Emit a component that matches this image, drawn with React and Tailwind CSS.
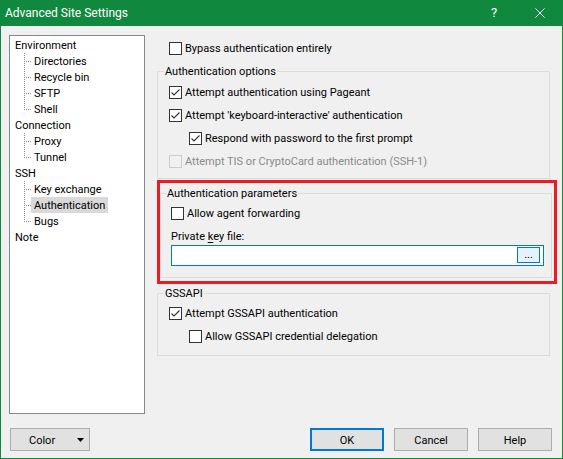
import React from "react";

const FONT = "font-['Roboto','Liberation_Sans',sans-serif]";

function Check({ checked = false, disabled = false }) {
  return (
    <span
      className={`flex h-[13px] w-[13px] shrink-0 items-center justify-center border ${
        disabled ? "border-[#cccccc] bg-[#f0f0f0]" : "border-[#333333] bg-white"
      }`}
    >
      {checked && (
        <svg width="11" height="11" viewBox="0 0 11 11">
          <polyline points="1.5,5.5 4,8 9.5,2.5" fill="none" stroke="#333333" strokeWidth="1.1" />
        </svg>
      )}
    </span>
  );
}

function CheckRow({ label, checked, disabled, indent = false, className = "" }) {
  return (
    <div className={`flex h-[16px] items-center gap-[3px] ${indent ? "pl-[20px]" : ""} ${className}`}>
      <Check checked={checked} disabled={disabled} />
      <span className={`mt-[2px] ${disabled ? "text-[#8a8a8a]" : "text-black"}`}>{label}</span>
    </div>
  );
}

function Legend({ children, className = "" }) {
  return (
    <legend className={`px-px ${className}`}>
      <span className="flex h-[16px] items-center">
        <span className="mt-[2px]">{children}</span>
      </span>
    </legend>
  );
}

const TREE = [
  { label: "Environment", children: ["Directories", "Recycle bin", "SFTP", "Shell"] },
  { label: "Connection", children: ["Proxy", "Tunnel"] },
  { label: "SSH", children: ["Key exchange", "Authentication", "Bugs"] },
  { label: "Note", children: [] },
];

function Connector({ last }) {
  return (
    <svg width="21" height="16" viewBox="0 0 21 16" className="shrink-0" shapeRendering="crispEdges">
      <line x1="14.5" y1="0" x2="14.5" y2={last ? 9 : 16} stroke="#8c8c8c" strokeDasharray="1 1" />
      <line x1="16" y1="8.5" x2="21" y2="8.5" stroke="#8c8c8c" strokeDasharray="1 1" />
    </svg>
  );
}

function Tree() {
  return (
    <div className="ml-[8px] h-[379px] w-[136px] shrink-0 border border-[#828790] bg-white pt-px">
      {TREE.map((node) => (
        <div key={node.label}>
          <div className="flex h-[16px] items-center pl-[5px]">
            <span className="mt-[2px]">{node.label}</span>
          </div>
          {node.children.map((c, i) => (
            <div key={c} className="flex h-[16px] items-center">
              <Connector last={i === node.children.length - 1} />
              <span
                className={`flex h-[16px] items-center px-[3px] ${
                  c === "Authentication" ? "bg-[#d9d9d9]" : ""
                }`}
              >
                <span className="mt-[2px]">{c}</span>
              </span>
            </div>
          ))}
        </div>
      ))}
    </div>
  );
}

function Button({ children, primary = false }) {
  return (
    <div
      className={`flex h-[23px] w-[74px] items-center justify-center bg-[#e1e1e1] ${
        primary ? "border-2 border-[#0078d7]" : "border border-[#adadad]"
      }`}
    >
      <span className="mt-[2px]">{children}</span>
    </div>
  );
}

export default function App() {
  return (
    <div className={`flex h-[459px] w-[563px] flex-col bg-[#10893e] text-[11px] leading-[16px] text-black ${FONT}`}>
      {/* Title bar */}
      <div className="flex h-[26px] shrink-0 items-center text-white">
        <span className="ml-[5px] text-[12px]">Advanced Site Settings</span>
        <div className="ml-auto flex h-[26px] w-[46px] items-center justify-center text-[13px]">?</div>
        <div className="flex h-[26px] w-[46px] items-center justify-center">
          <svg width="10" height="10" viewBox="0 0 10 10">
            <path d="M0.5 0.5 L9.5 9.5 M9.5 0.5 L0.5 9.5" stroke="#ffffff" strokeWidth="1" />
          </svg>
        </div>
      </div>

      {/* Body */}
      <div className="mx-px mb-px flex h-[432px] flex-col bg-[#f0f0f0]">
        <div className="mt-[9px] flex items-start">
          <Tree />

          <div className="ml-[12px] w-[400px]">
            <CheckRow className="ml-[12px] mt-[5px]" label="Bypass authentication entirely" />

            <fieldset className="mt-[7px] w-[393px] border border-[#dcdcdc] pb-[9px] pt-[5px]">
              <Legend className="ml-[6px]">Authentication options</Legend>
              <div className="flex flex-col gap-[7px] pl-[11px]">
                <CheckRow checked label="Attempt authentication using Pageant" />
                <CheckRow checked label="Attempt 'keyboard-interactive' authentication" />
                <CheckRow checked indent label="Respond with password to the first prompt" />
                <CheckRow disabled label="Attempt TIS or CryptoCard authentication (SSH-1)" />
              </div>
            </fieldset>

            <div className="mt-px h-[104px] w-[400px] border-[3px] border-[#ed1c24]">
              <fieldset className="mt-[2px] w-[392px] border border-[#dcdcdc] pb-[11px] pt-[4px]">
                <Legend className="ml-[5px]">Authentication parameters</Legend>
                <div className="pl-[10px]">
                  <CheckRow label="Allow agent forwarding" />
                  <div className="mt-[7px] flex h-[16px] items-center">
                    <span className="mt-[2px]">
                      Private <u className="underline-offset-2">k</u>ey file:
                    </span>
                  </div>
                  <div className="mt-px flex h-[21px] w-[373px] items-start justify-end border border-[#0078d7] bg-white pr-[3px] pt-px">
                    <div className="flex h-[16px] w-[23px] items-end justify-center border border-[#0078d7] bg-[#e5f1fb] text-[11px] leading-[14px]">
                      ...
                    </div>
                  </div>
                </div>
              </fieldset>
            </div>

            <fieldset className="mt-px w-[393px] border border-[#dcdcdc] pb-[11px] pt-[4px]">
              <Legend className="ml-[6px]">GSSAPI</Legend>
              <div className="flex flex-col gap-[7px] pl-[11px]">
                <CheckRow checked label="Attempt GSSAPI authentication" />
                <CheckRow indent label="Allow GSSAPI credential delegation" />
              </div>
            </fieldset>
          </div>
        </div>

        {/* Bottom buttons */}
        <div className="mt-[14px] flex items-center">
          <div className="ml-[9px] flex h-[23px] w-[80px] items-center border border-[#adadad] bg-[#e1e1e1]">
            <span className="ml-[18px] mt-[2px]">Color</span>
            <svg width="7" height="4" viewBox="0 0 7 4" className="ml-auto mr-[5px]">
              <polygon points="0,0 7,0 3.5,4" fill="#000000" />
            </svg>
          </div>
          <div className="ml-auto mr-[10px] flex gap-[10px]">
            <Button primary>OK</Button>
            <Button>Cancel</Button>
            <Button>Help</Button>
          </div>
        </div>
      </div>
    </div>
  );
}
